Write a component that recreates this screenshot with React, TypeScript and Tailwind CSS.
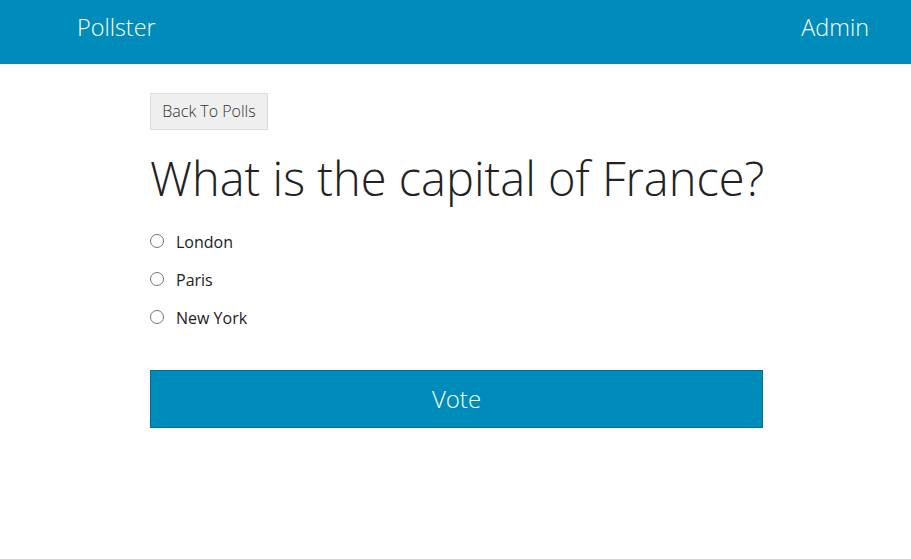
import React from "react";

export default function App() {
  const options = ["London", "Paris", "New York"];
  return (
    <div className="min-h-[559px] bg-white" style={{ fontFamily: '"Open Sans", "Liberation Sans", sans-serif' }}>
      <header className="h-16 bg-[#008cba] flex items-center justify-between pl-[77px] pr-[42px]">
        <span className="-mt-[8px] text-white text-[23.4px] font-light">Pollster</span>
        <span className="-mt-[8px] text-white text-[23.4px] font-light">Admin</span>
      </header>
      <main className="w-[613px] ml-[150px] pt-[31px]">
        <button className="h-[37px] w-[118px] -mt-[2px] pb-[2px] bg-[#efefef] border border-[#dcdcdc] text-[#333] text-[16px] font-light">
          Back To Polls
        </button>
        <h1 className="mt-[15px] text-[47px] font-light text-[#222] leading-[66px] whitespace-nowrap">
          What is the capital of France?
        </h1>
        <div className="mt-[12px] flex flex-col">
          {options.map((o) => (
            <label key={o} className="h-[38px] flex items-center text-[16px] text-[#222]">
              <span className="w-[14px] h-[14px] rounded-full border border-[#767676] bg-white mr-[12px] -mt-[2px]" />
              {o}
            </label>
          ))}
        </div>
        <button className="mt-[33px] w-[613px] h-[58px] bg-[#008cba] border border-[#007095] text-white text-[24px] font-light">
          Vote
        </button>
      </main>
    </div>
  );
}
